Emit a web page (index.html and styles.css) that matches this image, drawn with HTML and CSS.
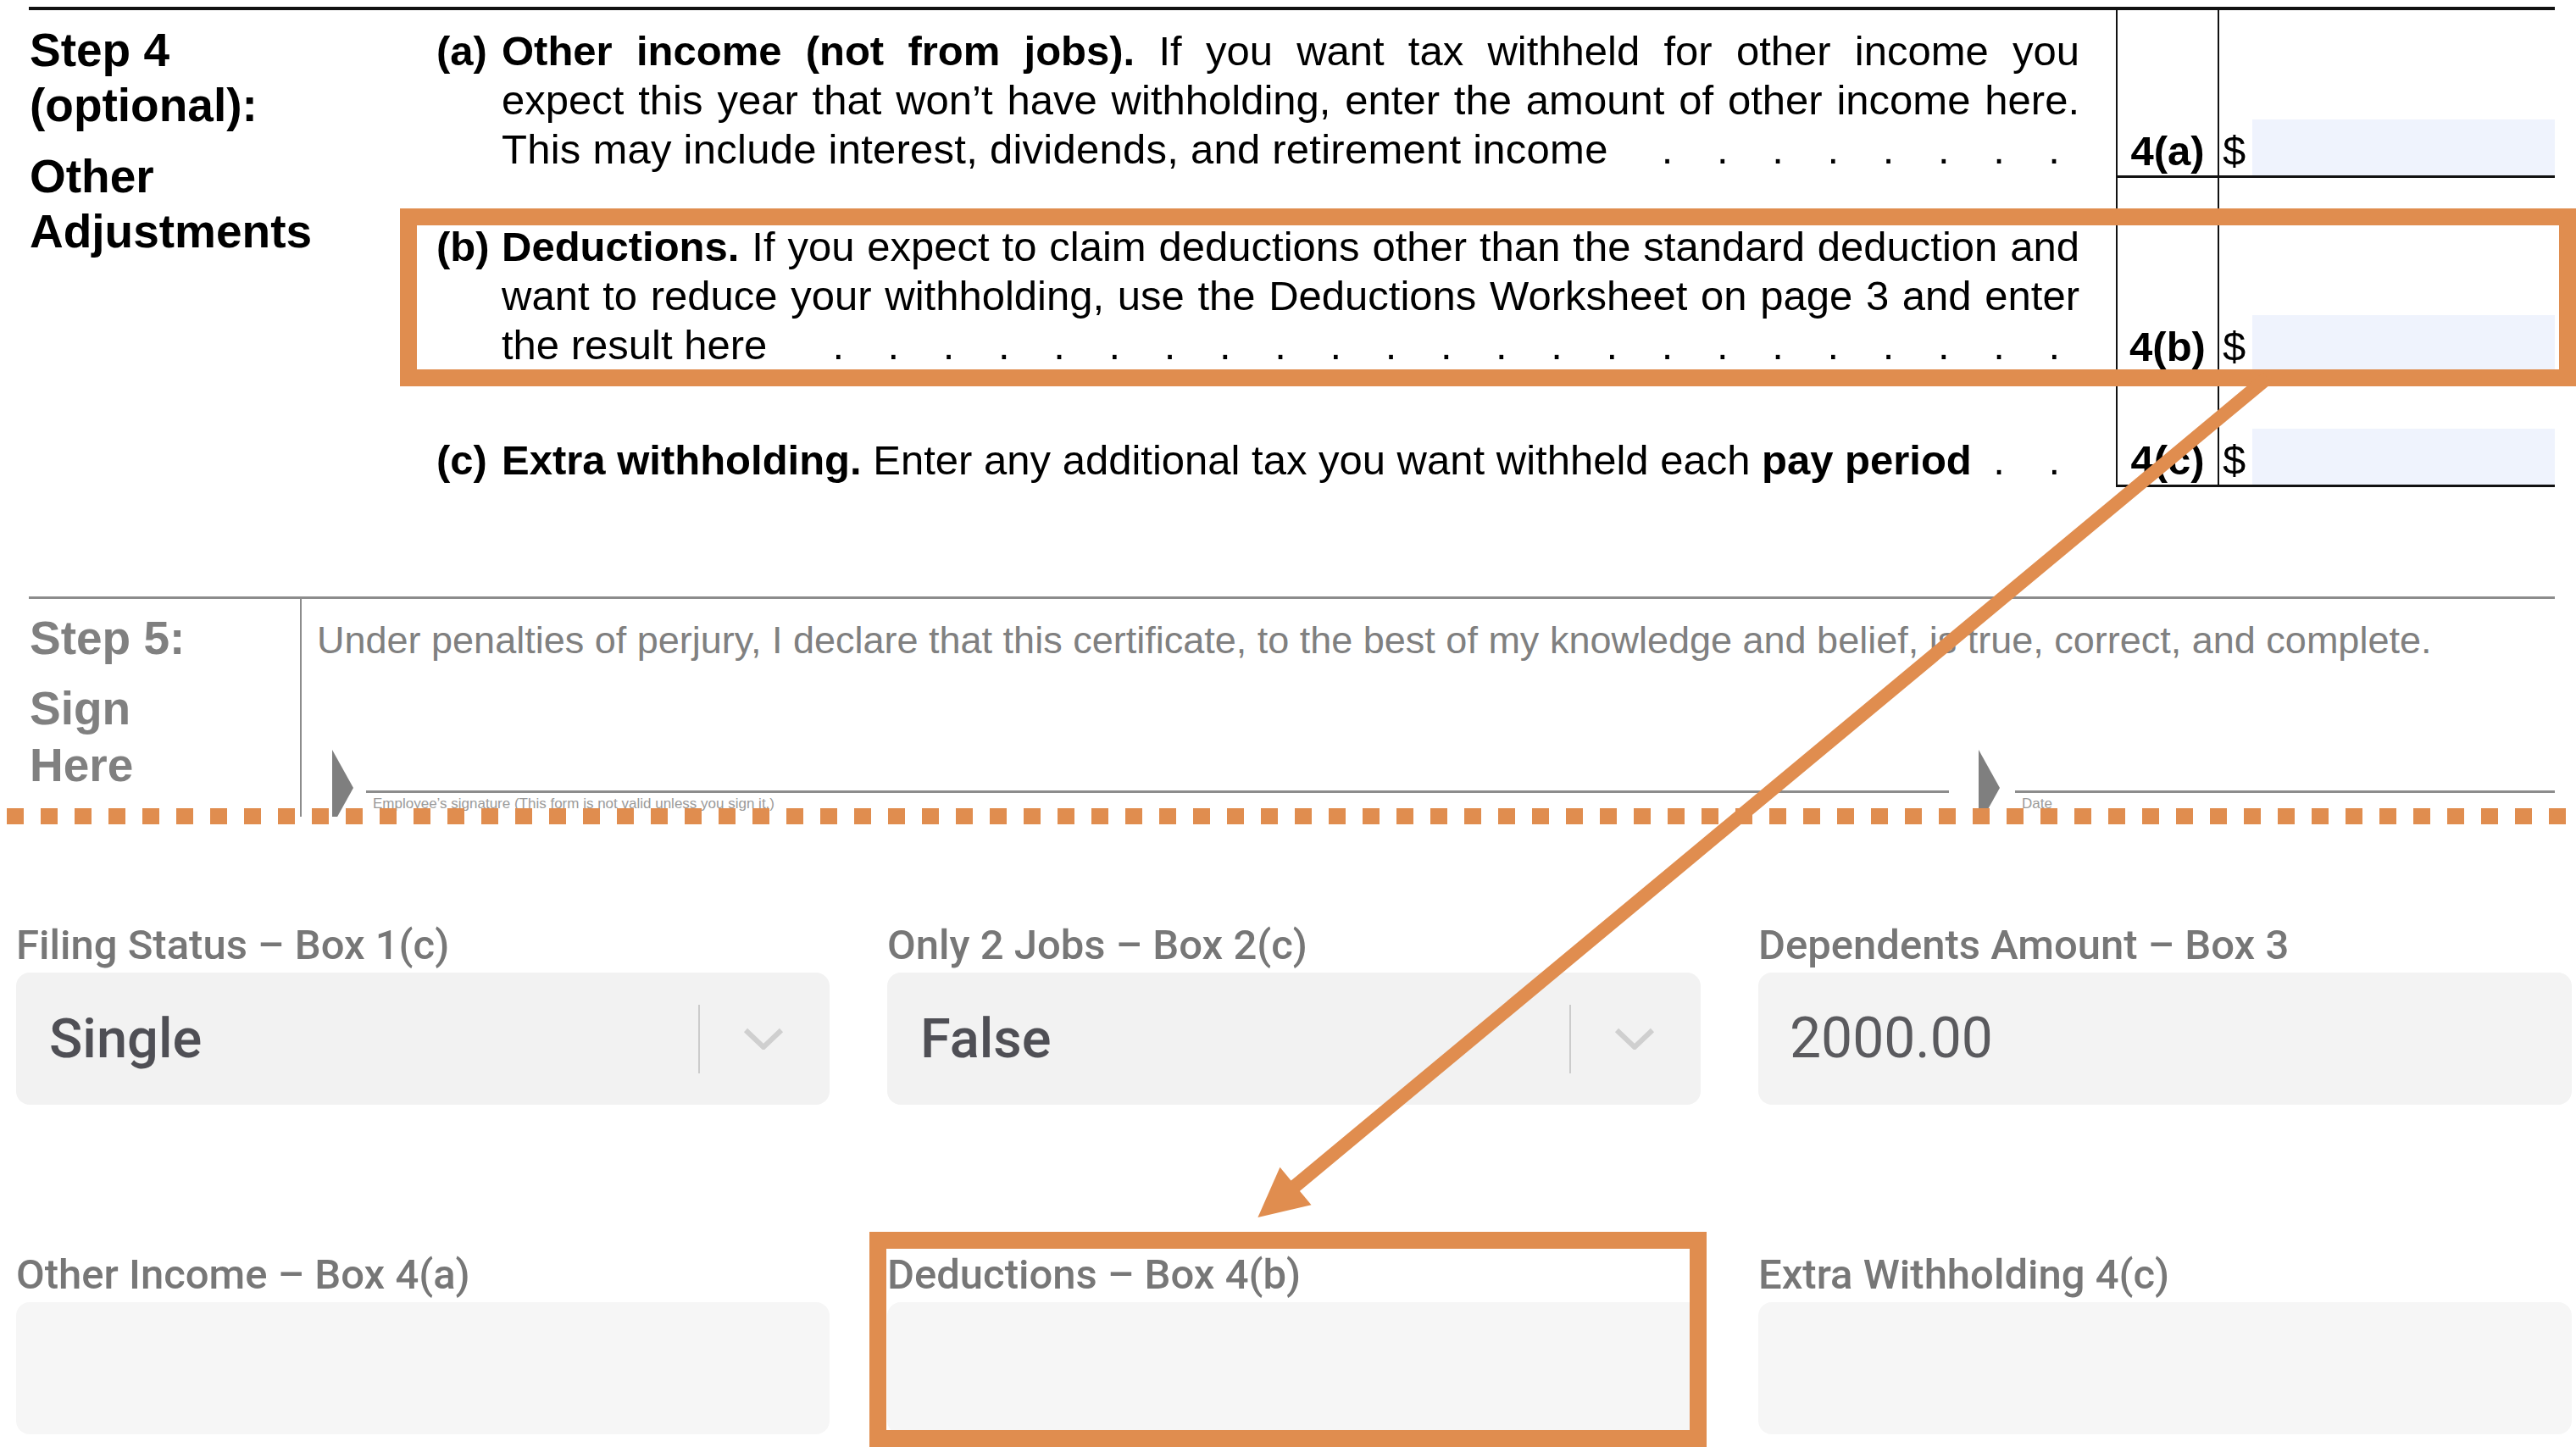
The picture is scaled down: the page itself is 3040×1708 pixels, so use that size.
FILE: index.html
```html
<!DOCTYPE html>
<html lang="en">
<head>
<meta charset="utf-8">
<title>W-4 Step 4 mapping</title>
<link rel="stylesheet" href="styles.css">
</head>
<body>
<div class="page">
  <section class="irs">
    <div class="step4">
      <div class="step-title">
        <div class="st-line">Step 4</div>
        <div class="st-line">(optional):</div>
        <div class="st-line st-gap">Other</div>
        <div class="st-line">Adjustments</div>
      </div>
      <div class="rows">
        <div class="row row-a">
          <div class="item">
            <span class="key">(a)</span>
            <div class="body">
              <span class="ln just"><b>Other income (not from jobs).</b> If you want tax withheld for other income you</span>
              <span class="ln just">expect this year that won’t have withholding, enter the amount of other income here.</span>
              <span class="ln lead"><span>This may include interest, dividends, and retirement income</span><span class="dots">. . . . . . . .</span></span>
            </div>
          </div>
          <div class="spacer"></div>
          <div class="code">4(a)</div>
          <div class="amt"><span class="cur">$</span><span class="field"></span></div>
        </div>
        <div class="row row-b">
          <div class="item">
            <span class="key">(b)</span>
            <div class="body">
              <span class="ln just"><b>Deductions.</b> If you expect to claim deductions other than the standard deduction and</span>
              <span class="ln just">want to reduce your withholding, use the Deductions Worksheet on page 3 and enter</span>
              <span class="ln lead"><span>the result here</span><span class="dots">. . . . . . . . . . . . . . . . . . . . . . .</span></span>
            </div>
          </div>
          <div class="spacer"></div>
          <div class="code">4(b)</div>
          <div class="amt"><span class="cur">$</span><span class="field"></span></div>
        </div>
        <div class="row row-c">
          <div class="item">
            <span class="key">(c)</span>
            <div class="body">
              <span class="ln lead"><span><b>Extra withholding.</b> Enter any additional tax you want withheld each <b>pay period</b></span><span class="dots">. .</span></span>
            </div>
          </div>
          <div class="spacer"></div>
          <div class="code">4(c)</div>
          <div class="amt"><span class="cur">$</span><span class="field"></span></div>
        </div>
      </div>
    </div>
    <div class="step5">
      <div class="s5-title">
        <div class="st-line">Step 5:</div>
        <div class="st-line s5-sign">Sign</div>
        <div class="st-line s5-here">Here</div>
      </div>
      <div class="s5-body">
        <p class="perjury">Under penalties of perjury, I declare that this certificate, to the best of my knowledge and belief, is true, correct, and complete.</p>
        <div class="sign-row">
          <svg class="sig-arrow" viewBox="0 0 25 90" aria-hidden="true"><polygon points="0,0 25,45 0,90"/></svg>
          <div class="sig-field sig-name"><span class="sig-label">Employee’s signature (This form is not valid unless you sign it.)</span></div>
          <svg class="sig-arrow sig-arrow-2" viewBox="0 0 25 90" aria-hidden="true"><polygon points="0,0 25,45 0,90"/></svg>
          <div class="sig-field sig-date"><span class="sig-label">Date</span></div>
        </div>
      </div>
    </div>
  </section>

  <div class="cutline"></div>

  <form class="webform">
    <div class="fld">
      <label class="fld-label">Filing Status – Box 1(c)</label>
      <div class="select">
        <span class="value">Single</span>
        <span class="sep"></span>
        <svg class="chev" viewBox="0 0 48 26" aria-hidden="true"><polyline points="3,3 24,23 45,3"/></svg>
      </div>
    </div>
    <div class="fld">
      <label class="fld-label">Only 2 Jobs – Box 2(c)</label>
      <div class="select">
        <span class="value">False</span>
        <span class="sep"></span>
        <svg class="chev" viewBox="0 0 48 26" aria-hidden="true"><polyline points="3,3 24,23 45,3"/></svg>
      </div>
    </div>
    <div class="fld">
      <label class="fld-label">Dependents Amount – Box 3</label>
      <div class="input input-filled"><span class="value value-input">2000.00</span></div>
    </div>
    <div class="fld">
      <label class="fld-label">Other Income – Box 4(a)</label>
      <div class="input"></div>
    </div>
    <div class="fld">
      <label class="fld-label">Deductions – Box 4(b)</label>
      <div class="input"></div>
    </div>
    <div class="fld">
      <label class="fld-label">Extra Withholding 4(c)</label>
      <div class="input"></div>
    </div>
  </form>

  <div class="mark mark-top"></div>
  <div class="mark mark-bottom"></div>
  <svg class="arrow" viewBox="0 0 3040 1708" aria-hidden="true">
    <line x1="2676" y1="446" x2="1526" y2="1402"/>
    <polygon points="1484.4,1437.1 1510.5,1377.7 1547.5,1422.3"/>
  </svg>
</div>
</body>
</html>
```

FILE: styles.css
```css
html, body {
  margin: 0;
  padding: 0;
  background: #ffffff;
}

.page {
  position: relative;
  width: 3040px;
  height: 1708px;
  overflow: hidden;
  background: #ffffff;
}

/* ---------- IRS form excerpt ---------- */
.irs {
  box-sizing: border-box;
  width: 2981px;
  height: 964px;
  margin-left: 34px;
  padding-top: 8px;
  overflow: hidden;
  font-family: "Liberation Sans", Arial, Helvetica, sans-serif;
  color: #000;
}

.step4 {
  box-sizing: border-box;
  display: flex;
  height: 696px;
  border-top: 4px solid #111;
}

.step-title {
  width: 481px;
  flex: none;
  padding-top: 15px;
  padding-left: 1px;
  box-sizing: border-box;
}

.st-line {
  font-size: 55px;
  line-height: 65px;
  font-weight: 700;
  white-space: nowrap;
}

.st-gap {
  margin-top: 19px;
}

.rows {
  display: flex;
  flex-direction: column;
}

.row {
  display: grid;
  grid-template-columns: 1939px 43px 120px 398px;
  box-sizing: border-box;
}

.row-a { height: 198px; }
.row-b { height: 231px; }
.row-c { height: 134px; }

.item {
  display: flex;
  font-size: 49px;
  line-height: 58px;
}

.row-a .item { padding-top: 19px; }
.row-b .item { padding-top: 52px; }
.row-c .item { padding-top: 73px; }

.key {
  width: 77px;
  flex: none;
  font-weight: 700;
}

.body {
  flex: 1;
  min-width: 0;
}

.ln {
  display: block;
}

.just {
  text-align: justify;
  text-align-last: justify;
  word-spacing: -2px;
}

.lead {
  display: flex;
  white-space: nowrap;
}

.row-a .lead > span:first-child {
  letter-spacing: 0.25px;
}

.dots {
  margin-left: auto;
  padding-right: 23px;
  word-spacing: 38px;
}

.code {
  border-left: 2px solid #111;
  border-bottom: 3px solid #111;
  display: flex;
  align-items: flex-end;
  justify-content: center;
  font-size: 49px;
  line-height: 58px;
  font-weight: 700;
}

.amt {
  border-left: 2px solid #111;
  border-bottom: 3px solid #111;
  display: flex;
  align-items: flex-end;
  padding-left: 4px;
  font-size: 49px;
  line-height: 58px;
}

.field {
  width: 357px;
  height: 66px;
  margin-left: auto;
  background: #eff3fd;
}

/* Step 5 (faded) */
.step5 {
  display: grid;
  grid-template-columns: 320px 1fr;
  border-top: 3px solid #8c8c8c;
  height: 260px;
  color: #808080;
}

.s5-title {
  padding-top: 14px;
  padding-left: 1px;
}

.s5-sign { margin-top: 18px; }
.s5-here { margin-top: 2px; }

.s5-body {
  border-left: 2px solid #8c8c8c;
  padding-left: 18px;
}

.perjury {
  margin: 0;
  padding-top: 23px;
  font-size: 45px;
  line-height: 52px;
  white-space: nowrap;
}

.sign-row {
  display: flex;
  align-items: flex-start;
  margin-top: 103px;
  margin-left: 18px;
}

.sig-arrow {
  width: 25px;
  height: 90px;
  flex: none;
  fill: #7f7f7f;
}

.sig-arrow-2 {
  margin-left: 35px;
}

.sig-field {
  margin-top: 48px;
  border-top: 3px solid #8c8c8c;
  padding-top: 3px;
  font-size: 17px;
  line-height: 20px;
  white-space: nowrap;
}

.sig-name {
  flex: 1;
  margin-left: 15px;
}

.sig-date {
  width: 637px;
  margin-left: 18px;
}

.sig-label {
  padding-left: 8px;
  color: #9a9a9a;
}

.cutline {
  position: absolute;
  left: 8px;
  right: 0;
  top: 954px;
  height: 19px;
  background: repeating-linear-gradient(90deg, #e08d4f 0 20px, transparent 20px 40px);
}

/* ---------- web form ---------- */
.webform {
  display: grid;
  grid-template-columns: repeat(3, 960px);
  column-gap: 68px;
  row-gap: 175px;
  margin: 0;
  padding: 126px 0 0 19px;
  font-family: Roboto, "Noto Sans", Arial, sans-serif;
}

.fld-label {
  display: block;
  font-size: 49px;
  font-weight: 500;
  line-height: 51px;
  color: #777777;
  margin-bottom: 7px;
  white-space: nowrap;
}

.select,
.input {
  height: 156px;
  border-radius: 16px;
  display: flex;
  align-items: center;
  box-sizing: border-box;
}

.select {
  background: #f2f2f2;
  padding-left: 39px;
}

.input {
  background: #f6f6f6;
}

.input-filled {
  background: #f3f3f3;
  padding-left: 37px;
}

.value {
  font-size: 65px;
  font-weight: 500;
  line-height: 76px;
  color: #4f4f55;
}

.value-input {
  font-size: 66px;
  font-weight: 400;
  color: #5a5a5e;
}

.sep {
  margin-left: auto;
  width: 2px;
  height: 81px;
  background: #cccccc;
}

.chev {
  width: 48px;
  height: 26px;
  margin-left: 51px;
  margin-right: 54px;
  fill: none;
  stroke: #cfcfcf;
  stroke-width: 6;
}

/* ---------- annotation overlays ---------- */
.mark {
  position: absolute;
  box-sizing: border-box;
  border: 20px solid #e08d4f;
  pointer-events: none;
}

.mark-top {
  left: 472px;
  top: 246px;
  width: 2568px;
  height: 210px;
}

.mark-bottom {
  left: 1026px;
  top: 1454px;
  width: 988px;
  height: 254px;
}

.arrow {
  position: absolute;
  left: 0;
  top: 0;
  width: 3040px;
  height: 1708px;
  pointer-events: none;
}

.arrow line {
  stroke: #e08d4f;
  stroke-width: 16;
}

.arrow polygon {
  fill: #e08d4f;
}
```
